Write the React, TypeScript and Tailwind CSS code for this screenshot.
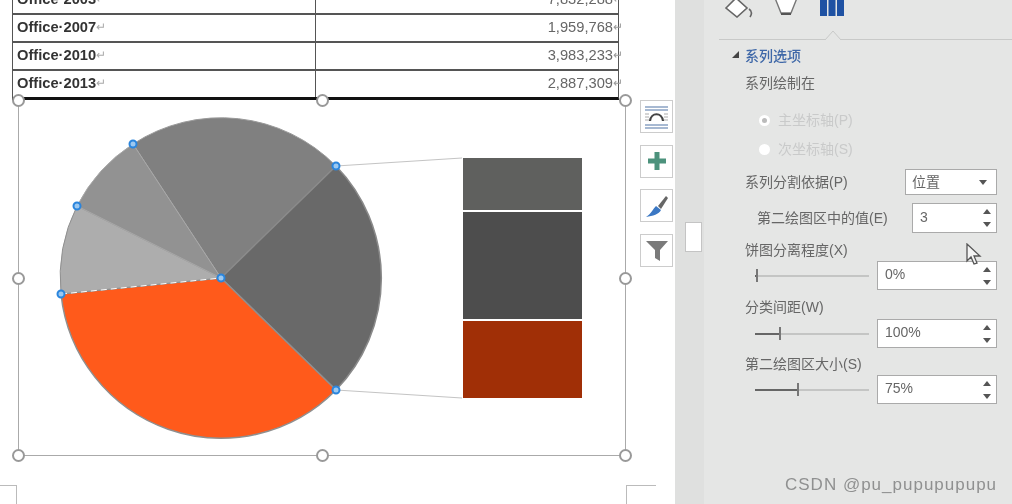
const cjk = { fontFamily: '"Liberation Sans","Noto Sans CJK SC",sans-serif' };

function Spin() {
  return (
    <svg width="10" height="22" viewBox="0 0 10 22" className="shrink-0">
      <path d="M1 7 L5 2 L9 7 Z" fill="#555" />
      <path d="M1 15 L5 20 L9 15 Z" fill="#555" />
    </svg>
  );
}

function NumRow({ value, fill, mt }: { value: string; fill: number; mt: string }) {
  return (
    <div className={`flex items-center ${mt}`}>
      <div className="relative w-[114px] h-[2px] ml-[10px] bg-[#c4c5c4]">
        <div className="absolute left-0 top-0 h-[2px] bg-[#666]" style={{ width: fill }} />
        <div className="absolute top-[-6px] w-[2px] h-[13px] bg-[#777]" style={{ left: fill }} />
      </div>
      <div className="ml-[8px] w-[120px] h-[29px] bg-white border border-[#aaa] flex items-center justify-between pl-[7px] pr-[4px] text-[14px] text-[#666]">
        <span className="-mt-[3px]">{value}</span>
        <Spin />
      </div>
    </div>
  );
}

function Row({ name, num }: { name: string; num: string }) {
  return (
    <div className="flex h-[28px] border-t-2 border-[#555]">
      <div className="w-[303px] border-r border-[#555] pl-[4px] pb-[2px] flex items-center text-[14.7px] font-bold text-[#333]">
        {name}<span className="text-[12px] font-normal text-[#aaa]">↵</span>
      </div>
      <div className="flex-1 pb-[2px] flex items-center justify-end text-[14.7px] text-[#666]">
        {num}<span className="text-[12px] text-[#999] w-[5px]">↵</span>
      </div>
    </div>
  );
}

function Handle({ className }: { className: string }) {
  return <div className={`absolute w-[13px] h-[13px] rounded-full bg-white border-2 border-[#999] ${className}`} />;
}

function ToolBtn({ children }: { children: React.ReactNode }) {
  return (
    <div className="w-[33px] h-[33px] bg-white border border-[#ccc] flex items-center justify-center">
      {children}
    </div>
  );
}

const C = [221, 278];
const pts = {
  a: [336, 166],
  b: [133, 144],
  c: [77, 206],
  d: [61, 294],
  e: [336, 390],
};
const slice = (p: number[], q: number[], large = 0) =>
  `M${C[0]} ${C[1]} L${p[0]} ${p[1]} A161 161 0 ${large} 1 ${q[0]} ${q[1]} Z`;

export default function App() {
  return (
    <div className="relative flex w-[1012px] h-[504px] overflow-hidden bg-white blur-[0.6px]" style={cjk}>
      {/* document */}
      <div className="relative w-[675px] shrink-0 bg-white">
        <div className="ml-[12px] mt-[-15px] w-[607px] border-x border-[#555] border-b-[3px] border-b-[#111]">
          <Row name="Office·2003" num="7,832,288" />
          <Row name="Office·2007" num="1,959,768" />
          <Row name="Office·2010" num="3,983,233" />
          <Row name="Office·2013" num="2,887,309" />
        </div>
        <div className="flex items-start ml-[18px]">
          <div className="relative w-[608px] h-[356px] border-x border-b border-[#aaa] shrink-0">
            <svg width="606" height="355" viewBox="19 100 606 355" className="block">
              <line x1="336" y1="166" x2="462" y2="158" stroke="#c4c4c4" />
              <line x1="336" y1="390" x2="462" y2="398" stroke="#c4c4c4" />
              <path d={slice(pts.b, pts.a)} fill="#808080" stroke="#9a9a9a" />
              <path d={slice(pts.a, pts.e)} fill="#696969" stroke="#8a8a8a" strokeWidth="1.5" />
              <path d={slice(pts.e, pts.d)} fill="#ff5a1b" stroke="#8f8f8f" strokeWidth="1.5" />
              <path d={slice(pts.d, pts.c)} fill="#adadad" stroke="#8f8f8f" />
              <path d={slice(pts.c, pts.b)} fill="#929292" stroke="#a8a8a8" />
              <line x1="61" y1="294" x2="221" y2="278" stroke="#fff" strokeWidth="1" strokeDasharray="6 4" />
              <rect x="463" y="158" width="119" height="52" fill="#5f605e" />
              <rect x="463" y="212" width="119" height="107" fill="#4d4d4d" />
              <rect x="463" y="321" width="119" height="77" fill="#a02f06" />
              {[pts.a, pts.b, pts.c, pts.d, pts.e, C].map((p, i) => (
                <circle key={i} cx={p[0]} cy={p[1]} r="3.5" fill="#9cc8f0" stroke="#2a85dd" strokeWidth="2" />
              ))}
            </svg>
            <Handle className="left-[-7px] top-[-6px]" />
            <Handle className="left-[297px] top-[-6px]" />
            <Handle className="left-[600px] top-[-6px]" />
            <Handle className="left-[-7px] top-[172px]" />
            <Handle className="left-[600px] top-[172px]" />
            <Handle className="left-[-7px] top-[349px]" />
            <Handle className="left-[297px] top-[349px]" />
            <Handle className="left-[600px] top-[349px]" />
          </div>
          <div className="flex flex-col gap-[11.5px] ml-[14px]">
            <ToolBtn>
              <svg width="25" height="25" viewBox="0 0 25 25" fill="none">
                <path d="M1 3H24M1 6H24M1 21H24M1 24H24" stroke="#8ba3c4" strokeWidth="1.4" />
                <path d="M1 10H5M1 13H5M1 16H5M20 10H24M20 13H24M20 16H24" stroke="#aaa" />
                <path d="M6 17C7 8 18 8 19 17" stroke="#444" strokeWidth="2.2" />
              </svg>
            </ToolBtn>
            <ToolBtn>
              <svg width="20" height="20" viewBox="0 0 20 20"><path d="M7.5 1H12.5V7.5H19V12.5H12.5V19H7.5V12.5H1V7.5H7.5Z" fill="#4c927c" /></svg>
            </ToolBtn>
            <ToolBtn>
              <svg width="24" height="24" viewBox="0 0 24 24">
                <path d="M13 12L21 2L23 4L16 15Z" fill="#666" />
                <path d="M11 12L16 16C14 20 8 22 1 23C6 20 8 15 11 12Z" fill="#3b78c4" />
              </svg>
            </ToolBtn>
            <ToolBtn>
              <svg width="24" height="24" viewBox="0 0 24 24"><path d="M1 3H23L15 12V23L10 20V12Z" fill="#7a7a7a" /></svg>
            </ToolBtn>
          </div>
        </div>
        <div className="absolute left-0 top-[485px] w-[17px] h-[19px] border-t border-r border-[#bbb]" />
        <div className="absolute left-[626px] top-[485px] w-[30px] h-[19px] border-t border-l border-[#bbb]" />
      </div>

      {/* scrollbar */}
      <div className="w-[29px] shrink-0 bg-[#dfe0df] pt-[222px] pl-[10px]">
        <div className="w-[17px] h-[30px] bg-white border border-[#c4c4c4]" />
      </div>

      {/* pane */}
      <div className="flex-1 bg-[#e5e6e5] text-[14px] leading-[20px] text-[#666]">
        <div className="relative h-[40px] ml-[15px] border-b border-[#c8c9c8]">
          <div className="flex items-start gap-[20px] pl-[6px]">
            <svg width="28" height="18" viewBox="0 0 28 18" fill="none">
              <path d="M1 8L11 -2L22 8L12 17Z" fill="#fff" stroke="#666" strokeWidth="1.6" />
              <path d="M24 9C27 11 27 14 25 17" stroke="#666" strokeWidth="1.6" />
            </svg>
            <svg width="26" height="18" viewBox="0 0 26 18" fill="none">
              <path d="M2 -2L8 13H18L24 -2" fill="#fff" stroke="#777" strokeWidth="1.4" />
              <path d="M8 14H18" stroke="#555" strokeWidth="2" />
            </svg>
            <svg width="24" height="17" viewBox="0 0 24 17" className="ml-[1px]">
              <path d="M0 0H7V16H0ZM8.5 0H15.5V16H8.5ZM17 0H24V16H17Z" fill="#1f52a3" />
            </svg>
          </div>
          <svg width="16" height="9" viewBox="0 0 16 9" className="absolute left-[106px] bottom-[-1px]">
            <path d="M0 9L8 0L16 9" fill="#e5e6e5" stroke="#c8c9c8" />
          </svg>
        </div>

        <div className="pl-[41px]">
          <div className="relative mt-[6px] text-[#3f68a8] font-medium">
            <svg width="8" height="8" viewBox="0 0 8 8" className="absolute left-[-13px] top-[5px]"><path d="M7 0V7H0Z" fill="#444" /></svg>
            系列选项
          </div>
          <div className="mt-[7px]">系列绘制在</div>
          <div className="mt-[17px] ml-[14px] flex items-center text-[#c9caca]">
            <span className="mr-[8px] w-[11px] h-[11px] rounded-full bg-white flex items-center justify-center">
              <span className="w-[5px] h-[5px] rounded-full bg-[#bbb]" />
            </span>
            <span>主坐标轴(P)</span>
          </div>
          <div className="mt-[9px] ml-[14px] flex items-center text-[#c9caca]">
            <span className="mr-[8px] w-[11px] h-[11px] rounded-full bg-white" />
            <span>次坐标轴(S)</span>
          </div>
          <div className="mt-[10px] h-[26px] flex items-center justify-between pr-[15px]">
            <span>系列分割依据(P)</span>
            <div className="w-[92px] h-[26px] bg-white border border-[#aaa] flex items-center justify-between pl-[6px] pr-[9px]">
              <span>位置</span>
              <svg width="8" height="5" viewBox="0 0 8 5"><path d="M0 0H8L4 5Z" fill="#555" /></svg>
            </div>
          </div>
          <div className="mt-[8px] h-[30px] flex items-center justify-between pl-[12px] pr-[15px]">
            <span>第二绘图区中的值(E)</span>
            <div className="w-[85px] h-[30px] bg-white border border-[#aaa] flex items-center justify-between pl-[7px] pr-[4px]">
              <span className="-mt-[3px]">3</span>
              <Spin />
            </div>
          </div>
          <div className="mt-[7px]">饼图分离程度(X)</div>
          <NumRow value="0%" fill={1} mt="mt-[1px]" />
          <div className="mt-[7px]">分类间距(W)</div>
          <NumRow value="100%" fill={24} mt="mt-[2px]" />
          <div className="mt-[6px]">第二绘图区大小(S)</div>
          <NumRow value="75%" fill={42} mt="mt-[1px]" />
        </div>
      </div>

      {/* cursor */}
      <svg width="17" height="23" viewBox="0 0 17 23" className="absolute left-[966px] top-[243px]">
        <path d="M1 1V18L5 14L8 21L11 20L8 13H14Z" fill="#f4f4f4" stroke="#555" strokeWidth="1.3" />
      </svg>

      {/* watermark */}
      <div className="absolute left-[785px] top-[474px] text-[17px] leading-[22px] tracking-[1px] text-[#8f9090]" style={{ fontFamily: '"Liberation Sans",sans-serif' }}>
        CSDN @pu_pupupupupu
      </div>
    </div>
  );
}
